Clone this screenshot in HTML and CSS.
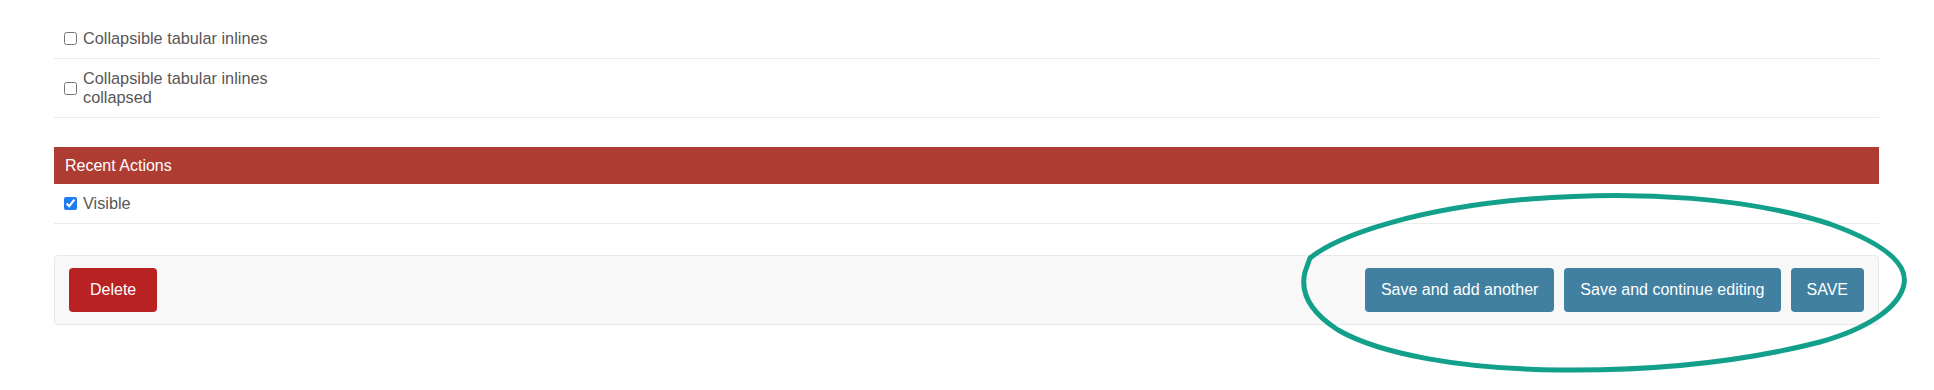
FILE: index.html
```html
<!DOCTYPE html>
<html lang="en">
<head>
    <meta charset="UTF-8">
    <title>Change dashboard settings</title>
    <link rel="stylesheet" href="styles.css">
</head>
<body>
    <div class="page">
        <!-- theme options -->
        <div class="module">
            <div class="form-row">
                <label class="check">
                    <input type="checkbox">
                    <span class="check-text">Collapsible tabular inlines</span>
                </label>
            </div>
            <div class="form-row">
                <label class="check">
                    <input type="checkbox">
                    <span class="check-text">Collapsible tabular inlines collapsed</span>
                </label>
            </div>
        </div>

        <!-- recent actions -->
        <div class="module module-recent">
            <h2 class="module-title">Recent Actions</h2>
            <div class="form-row">
                <label class="check">
                    <input type="checkbox" checked>
                    <span class="check-text">Visible</span>
                </label>
            </div>
        </div>

        <!-- submit row -->
        <div class="submit-row">
            <a href="#" class="btn btn-delete">Delete</a>
            <div class="submit-buttons">
                <button class="btn btn-save">Save and add another</button>
                <button class="btn btn-save">Save and continue editing</button>
                <button class="btn btn-save">SAVE</button>
            </div>
        </div>
    </div>

    <!-- hand drawn highlight -->
    <svg class="annotation" width="1934" height="390" viewBox="0 0 1934 390">
        <path d="M1310 258 C1340 234, 1420 208, 1530 199 C1640 190, 1750 198, 1830 224 C1880 242, 1908 262, 1904 284 C1900 306, 1870 328, 1820 342 C1750 360, 1660 371, 1560 370 C1460 369, 1380 354, 1338 330 C1310 312, 1300 292, 1305 272 L1310 258"
              fill="none" stroke="#13a08b" stroke-width="5" stroke-linecap="round" stroke-linejoin="round"/>
    </svg>
</body>
</html>
```

FILE: styles.css
```css
body {
    font-family: "Liberation Sans", Arial, sans-serif;
    font-size: 16px;
    margin: 0;
    padding: 0;
    background: white;
    color: #575757;
}

.page {
    padding: 19px 55px 0 54px;
}

.module {
    margin: 0;
}

.module-recent {
    margin-top: 29px;
}

.module-title {
    margin: 0;
    background: #ae3c33;
    color: white;
    font-size: 16px;
    font-weight: normal;
    line-height: 19px;
    padding: 9px 11px;
}

.form-row {
    padding: 10px 10px;
    border-bottom: 1px solid #ebebeb;
    line-height: 19px;
}

.check {
    display: flex;
    align-items: center;
}

.check input {
    margin: 0 6px 0 0;
    width: 13px;
    height: 13px;
    accent-color: #1f7cf0;
}

.check-text {
    width: 200px;
    font-size: 16.3px;
}

.submit-row {
    display: flex;
    justify-content: space-between;
    align-items: center;
    margin-top: 31px;
    padding: 12px 14px;
    background: #f8f8f8;
    border: 1px solid #e8e8e8;
    border-radius: 4px;
    box-shadow: 0 10px 12px -4px rgba(0,0,0,0.035);
}

.submit-buttons {
    display: flex;
    gap: 10px;
}

.btn {
    display: inline-flex;
    align-items: center;
    justify-content: center;
    height: 44px;
    box-sizing: border-box;
    border: none;
    border-radius: 4px;
    color: white;
    font-family: inherit;
    font-size: 16px;
    text-decoration: none;
    cursor: pointer;
}

.btn-delete {
    background: #b92222;
    padding: 0 21px;
}

.btn-save {
    background: #4180a0;
    padding: 0 16px;
}

.annotation {
    position: absolute;
    top: 0;
    left: 0;
    pointer-events: none;
}
```
